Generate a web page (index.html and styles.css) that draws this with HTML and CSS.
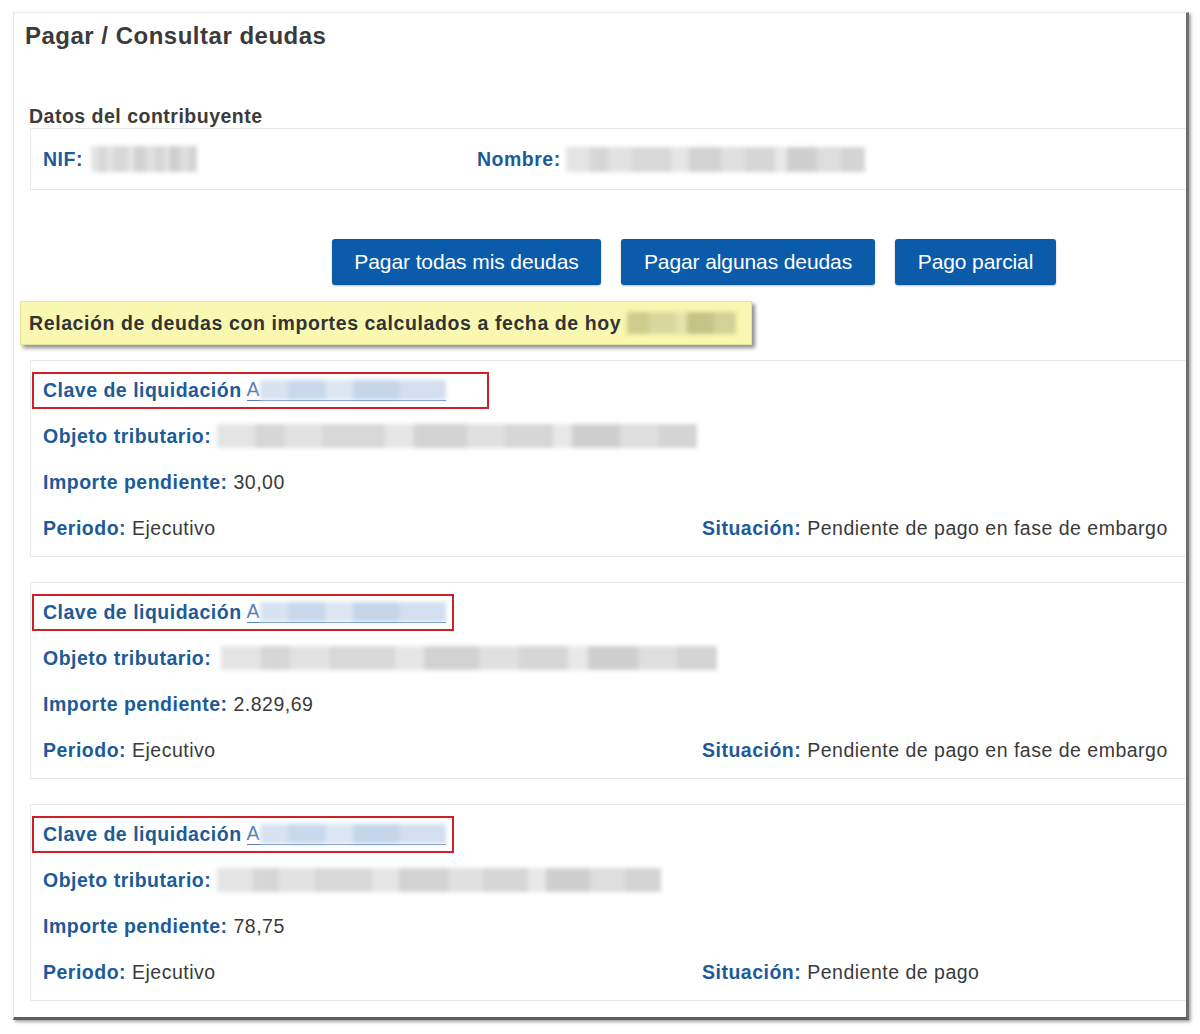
FILE: index.html
```html
<!DOCTYPE html>
<html lang="es">
<head>
<meta charset="utf-8">
<title>Pagar / Consultar deudas</title>
<link rel="stylesheet" href="styles.css">
</head>
<body>
<div class="frame">
  <h1 class="title">Pagar / Consultar deudas</h1>

  <h2 class="section-label">Datos del contribuyente</h2>
  <div class="data-box">
    <div class="data-field nif"><span class="lbl">NIF:</span><span class="blur grey b-nif"></span></div>
    <div class="data-field"><span class="lbl">Nombre:</span><span class="blur grey b-nombre"></span></div>
  </div>

  <div class="actions">
    <button class="btn b1">Pagar todas mis deudas</button>
    <button class="btn b2">Pagar algunas deudas</button>
    <button class="btn b3">Pago parcial</button>
  </div>

  <div class="notice">Relación de deudas con importes calculados a fecha de hoy <span class="blur olive b-fecha"></span></div>

  <div class="card">
    <div class="row"><div class="clave wide"><span class="lbl">Clave de liquidación</span> <a class="link" href="#">A<span class="blur blue b-clave"></span></a></div></div>
    <div class="row"><span class="lbl">Objeto tributario:</span>&nbsp;<span class="blur grey b-obj1"></span></div>
    <div class="row"><span class="lbl">Importe pendiente:</span>&nbsp;<span class="val">30,00</span></div>
    <div class="row split"><div><span class="lbl">Periodo:</span> <span class="val">Ejecutivo</span></div><div><span class="lbl">Situación:</span> <span class="val">Pendiente de pago en fase de embargo</span></div></div>
  </div>

  <div class="card">
    <div class="row"><div class="clave"><span class="lbl">Clave de liquidación</span> <a class="link" href="#">A<span class="blur blue b-clave"></span></a></div></div>
    <div class="row"><span class="lbl">Objeto tributario:</span>&nbsp;<span class="blur grey b-obj2"></span></div>
    <div class="row"><span class="lbl">Importe pendiente:</span>&nbsp;<span class="val">2.829,69</span></div>
    <div class="row split"><div><span class="lbl">Periodo:</span> <span class="val">Ejecutivo</span></div><div><span class="lbl">Situación:</span> <span class="val">Pendiente de pago en fase de embargo</span></div></div>
  </div>

  <div class="card">
    <div class="row"><div class="clave"><span class="lbl">Clave de liquidación</span> <a class="link" href="#">A<span class="blur blue b-clave"></span></a></div></div>
    <div class="row"><span class="lbl">Objeto tributario:</span>&nbsp;<span class="blur grey b-obj3"></span></div>
    <div class="row"><span class="lbl">Importe pendiente:</span>&nbsp;<span class="val">78,75</span></div>
    <div class="row split"><div><span class="lbl">Periodo:</span> <span class="val">Ejecutivo</span></div><div><span class="lbl">Situación:</span> <span class="val">Pendiente de pago</span></div></div>
  </div>
</div>
</body>
</html>
```

FILE: styles.css
```css
* { box-sizing: border-box; }
html, body { margin: 0; padding: 0; background: #fff; }
body {
  font-family: "Liberation Sans", Arial, sans-serif;
  color: #333;
  width: 1200px;
  height: 1034px;
  overflow: hidden;
}

.frame {
  margin: 12px 0 0 13px;
  width: 1176px;
  height: 1008px;
  border-left: 1px solid #e4e4e4;
  border-top: 1px solid #ececec;
  border-right: 3px solid #6e6e6e;
  border-bottom: 3px solid #5e5e5e;
  box-shadow: 2px 2px 3px rgba(0,0,0,0.35);
  overflow: hidden;
  background: #fff;
}

.title {
  margin: 0;
  padding: 10px 0 0 11px;
  font-size: 24px;
  letter-spacing: 0.5px;
  line-height: 26px;
  font-weight: bold;
  color: #3b3b3b;
}

.section-label {
  margin: 56px 0 1px 15px;
  font-size: 19.5px;
  letter-spacing: 0.5px;
  line-height: 22px;
  font-weight: bold;
  color: #3b3b3b;
}

.lbl { font-weight: bold; color: #1d5b98; }
.val { color: #3a3a3a; }

.data-box {
  margin-left: 16px;
  height: 62px;
  border: 1px solid #e9e9e9;
  border-right: none;
  display: flex;
  align-items: center;
  padding-left: 12px;
  font-size: 19.5px;
  letter-spacing: 0.5px;
}
.data-field { display: flex; align-items: center; }
.data-field.nif { width: 434px; }

.blur {
  display: inline-block;
  filter: blur(2px);
  vertical-align: middle;
}
.grey {
  background:
    linear-gradient(90deg, #e4e4e4 0 8%, #d6d6d6 8% 14%, #e2e2e2 14% 22%, #d8d8d8 22% 35%, #e6e6e6 35% 41%, #d2d2d2 41% 52%, #e0e0e0 52% 60%, #d6d6d6 60% 70%, #e8e8e8 70% 74%, #cfcfcf 74% 84%, #dedede 84% 92%, #d4d4d4 92% 100%);
}
.olive {
  background: linear-gradient(90deg, #cdcd8e 0 20%, #d8d89e 20% 45%, #e2e2ac 45% 55%, #c4c487 55% 80%, #d2d296 80% 100%);
}
.blue {
  background: linear-gradient(90deg, #d8e3f1 0 15%, #c9d8ec 15% 35%, #dce6f3 35% 50%, #c4d5ea 50% 75%, #d3deef 75% 100%);
}

.b-nif { width: 106px; height: 26px; margin-left: 8px; }
.b-nombre { width: 299px; height: 25px; margin-left: 5px; }
.b-fecha { width: 109px; height: 22px; margin-left: 6px; }
.b-clave { width: 186px; height: 20px; }
.b-obj1 { width: 480px; height: 24px; }
.b-obj2 { width: 496px; height: 24px; margin-left: 4px; }
.b-obj3 { width: 444px; height: 24px; }

.actions {
  margin: 49px 0 0 318px;
  display: flex;
  gap: 20px;
}
.btn {
  height: 46px;
  border: none;
  border-radius: 3px;
  background: #0b5bab;
  color: #fff;
  font-family: "Liberation Sans", Arial, sans-serif;
  font-size: 21px;
  letter-spacing: -0.1px;
  padding: 0;
  box-shadow: 0 1px 2px rgba(0,0,0,0.25);
}
.b1 { width: 269px; }
.b2 { width: 254px; }
.b3 { width: 161px; }

.notice {
  margin: 16px 0 0 6px;
  width: 732px;
  height: 44px;
  background: #f8f8b2;
  border: 1px solid #e4e49c;
  box-shadow: 3px 3px 4px rgba(0,0,0,0.45);
  display: flex;
  align-items: center;
  padding-left: 8px;
  font-size: 19.5px;
  letter-spacing: 0.6px;
  font-weight: bold;
  color: #333;
  white-space: nowrap;
}

.card {
  margin: 15px 0 0 16px;
  border: 1px solid #e9e9e9;
  border-right: none;
  padding: 6px 0 5px 0;
  font-size: 19.5px;
  letter-spacing: 0.5px;
}
.card + .card { margin-top: 25px; }

.row {
  height: 46px;
  display: flex;
  align-items: center;
  padding-left: 12px;
  white-space: nowrap;
}
.row:first-child { padding-left: 1px; }
.row.split { display: grid; grid-template-columns: 659px auto; align-items: center; }

.clave {
  width: 422px;
  height: 37px;
  border: 2px solid #cf1f27;
  padding-left: 9px;
  display: flex;
  align-items: center;
}
.clave.wide { width: 457px; }

.link {
  color: #5a80b5;
  text-decoration: none;
  border-bottom: 1px solid #5a80b5;
  line-height: 19px;
  display: inline-flex;
  align-items: center;
  margin-left: 5px;
}
```
